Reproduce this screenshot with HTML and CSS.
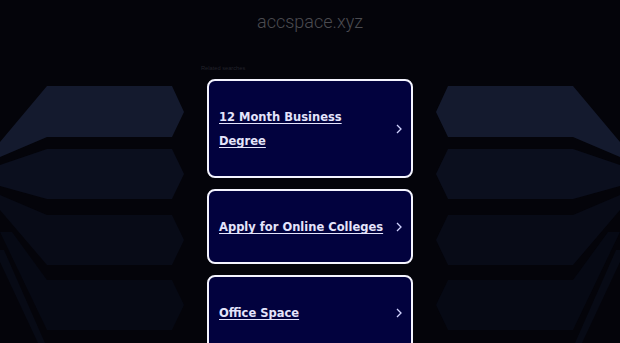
FILE: index.html
```html
<!DOCTYPE html>
<html lang="en">
<head>
<meta charset="utf-8">
<title>accspace.xyz</title>
<link rel="stylesheet" href="styles.css">
</head>
<body>
<svg class="backdrop" width="620" height="343" viewBox="0 0 620 343" aria-hidden="true">
  <g class="side">
    <polygon fill="#141a2e" points="47,86 172,86 184,112 172,137 47,137 0,157 0,142"/>
    <polygon fill="#0b0f1e" points="0,165 47,149 172,149 184,174 172,199 47,199 0,186"/>
    <polygon fill="#080b17" points="0,195 47,215 172,215 184,240 172,265 47,265 0,210"/>
    <polygon fill="#060914" points="12,232 47,280 172,280 184,305 172,330 47,330 0,232"/>
    <polygon fill="#070a15" points="0,250 4,250 45,343 38,343 0,262"/>
  </g>
  <g class="side" transform="translate(620,0) scale(-1,1)">
    <polygon fill="#141a2e" points="47,86 172,86 184,112 172,137 47,137 0,157 0,142"/>
    <polygon fill="#0b0f1e" points="0,165 47,149 172,149 184,174 172,199 47,199 0,186"/>
    <polygon fill="#080b17" points="0,195 47,215 172,215 184,240 172,265 47,265 0,210"/>
    <polygon fill="#060914" points="12,232 47,280 172,280 184,305 172,330 47,330 0,232"/>
    <polygon fill="#070a15" points="0,250 4,250 45,343 38,343 0,262"/>
  </g>
</svg>
<div class="page">
  <header class="header">
    <h1 class="domain">accspace.xyz</h1>
  </header>
  <main class="searches">
    <p class="label">Related searches</p>
    <a class="card" href="#">
      <span class="card-text">12 Month Business Degree</span>
      <svg class="chev" width="6" height="10" viewBox="0 0 6 10"><path d="M1 1 L5 5 L1 9" fill="none" stroke="#d0d2ff" stroke-width="1.3"/></svg>
    </a>
    <a class="card" href="#">
      <span class="card-text">Apply for Online Colleges</span>
      <svg class="chev" width="6" height="10" viewBox="0 0 6 10"><path d="M1 1 L5 5 L1 9" fill="none" stroke="#d0d2ff" stroke-width="1.3"/></svg>
    </a>
    <a class="card" href="#">
      <span class="card-text">Office Space</span>
      <svg class="chev" width="6" height="10" viewBox="0 0 6 10"><path d="M1 1 L5 5 L1 9" fill="none" stroke="#d0d2ff" stroke-width="1.3"/></svg>
    </a>
  </main>
</div>
</body>
</html>
```
FILE: styles.css
```css
html, body {
  margin: 0;
  padding: 0;
  background: #04040a;
  overflow: hidden;
  height: 343px;
}
.backdrop {
  position: absolute;
  left: 0;
  top: 0;
  z-index: 0;
}
.page {
  position: relative;
  z-index: 1;
  display: flex;
  flex-direction: column;
  align-items: center;
}
.header {
  height: 42px;
  display: flex;
  align-items: center;
  justify-content: center;
}
.domain {
  margin: 0;
  font-family: Roboto, "Liberation Sans", sans-serif;
  font-weight: 300;
  font-size: 18px;
  color: #4b4b50;
}
.searches {
  width: 218px;
  display: flex;
  flex-direction: column;
  gap: 10px;
  margin-top: 22px;
}
.label {
  margin: 0 0 -3px 0;
  font-family: "Liberation Sans", Arial, sans-serif;
  font-size: 5.7px;
  line-height: 8px;
  color: #23232a;
}
.card {
  margin: 0 6px;
  display: flex;
  align-items: center;
  justify-content: space-between;
  gap: 12px;
  padding: 24px 9px 23px 10px;
  border: 2px solid #f4f4ff;
  border-radius: 8px;
  background: #02023e;
  text-decoration: none;
}
.card + .card {
  margin-top: 1px;
}
.card-text {
  font-family: "DejaVu Sans", Verdana, sans-serif;
  font-weight: bold;
  font-size: 11.5px;
  line-height: 24px;
  color: #e4e4fb;
  text-decoration: underline;
  text-underline-offset: 1.5px;
}
.chev {
  flex: none;
}
```
